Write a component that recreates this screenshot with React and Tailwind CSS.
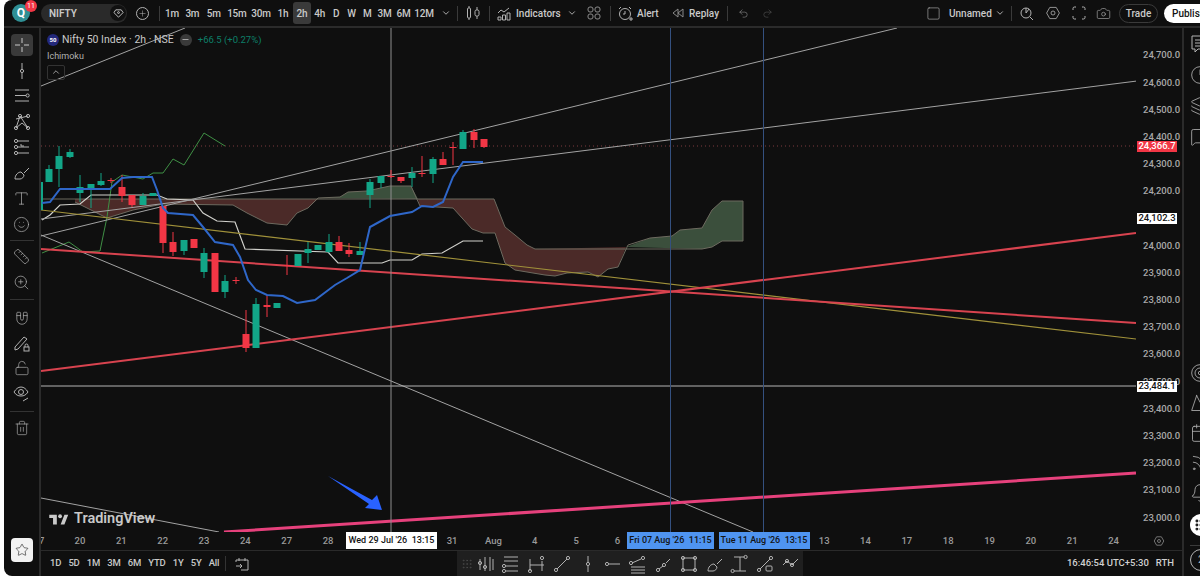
import {
  Bell, Calendar, Camera, ChevronDown, ChevronUp, Magnet, Minus, Plus, Redo2, Rss, Ruler, Smile, Square, Star, Trash2, Type, Undo2, ZoomIn, LockOpen, Clock, MessageSquare, Layers, Target, Mountain, Grip,
} from "lucide-react";

const timeframes = [
  { label: "1m", cell: "w-[20px]" }, { label: "3m", cell: "w-[20.750px]" }, { label: "5m", cell: "w-[22px]" }, { label: "15m", cell: "w-[24.250px]" },
  { label: "30m", cell: "w-[24px]" }, { label: "1h", cell: "w-[20px]" }, { label: "2h", cell: "w-[18px] rounded-[3px] bg-[#3a3a3a]" }, { label: "4h", cell: "w-[17.500px]" },
  { label: "D", cell: "w-[15.500px]" }, { label: "W", cell: "w-[15px]" }, { label: "M", cell: "w-[16.500px]" }, { label: "3M", cell: "w-[18px]" },
  { label: "6M", cell: "w-[20px]" }, { label: "12M", cell: "w-[21px]" },
];
const ranges = ["1D", "5D", "1M", "3M", "6M", "YTD", "1Y", "5Y", "All"];
const prices = ["24,700.0", "24,600.0", "24,500.0", "24,400.0", "24,300.0", "24,200.0", "", "24,000.0", "23,900.0", "23,800.0", "23,700.0", "23,600.0", "23,500.0", "23,400.0", "23,300.0", "23,200.0", "23,100.0", "23,000.0"];
const days = ["20", "21", "22", "23", "24", "27", "28", "", "", "31", "Aug", "4", "5", "6", "", "", "", "", "13", "14", "17", "18", "19", "20", "21", "24"];

// x, wick top, wick bottom, body top, body bottom, up
const candles = [
  [49, 165, 182, 169, 182, 1], [59, 146, 187, 156, 169, 1], [70, 149, 158, 152, 157, 1],
  [80, 175, 202, 187, 193, 1], [91, 184, 208, 184, 188, 1], [101, 173, 186, 181, 185, 1], [111, 178, 183, 180, 181, 0],
  [122, 175, 202, 187, 196, 0], [132, 195, 207, 195, 205, 0], [143, 193, 205, 196, 205, 1], [153, 193, 196, 193, 196, 1],
  [163, 206, 253, 206, 243, 0], [173, 232, 256, 242, 252, 0], [184, 240, 255, 240, 251, 1], [194, 239, 248, 239, 248, 0],
  [204, 248, 278, 253, 272, 1], [215, 253, 292, 253, 292, 0], [225, 275, 298, 281, 292, 1], [236, 277, 284, 280, 281, 0],
  [246, 310, 352, 334, 348, 0], [256, 298, 348, 304, 348, 1], [267, 295, 317, 305, 307, 0], [277, 303, 308, 303, 308, 1],
  [287, 255, 275, 265, 266, 0], [298, 254, 266, 254, 266, 1], [308, 242, 263, 249, 253, 1], [318, 245, 250, 245, 250, 1],
  [329, 234, 253, 242, 252, 1], [339, 236, 251, 242, 251, 0], [349, 243, 257, 250, 254, 0], [360, 242, 255, 251, 255, 1],
  [370, 179, 208, 182, 195, 1], [381, 176, 188, 176, 183, 1], [391, 170, 178, 176, 177, 0], [401, 177, 183, 177, 181, 0],
  [412, 167, 187, 173, 178, 1], [422, 156, 177, 173, 174, 0], [433, 157, 183, 159, 174, 1], [443, 152, 165, 159, 165, 0],
  [453, 142, 165, 147, 148, 0], [463, 130, 149, 132, 149, 1], [474, 129, 148, 132, 140, 0], [484, 139, 148, 139, 147, 0],
];

const blueLine = "42,203 50,202 60,189 110,189 122,178 133,177 152,177 157,190 163,208 168,213 193,215 203,227 215,242 233,245 240,257 248,280 256,290 267,295 283,296 297,303 315,300 335,285 347,278 360,270 370,227 390,216 412,212 422,206 433,207 443,202 453,177 463,162 483,162";
const whiteLine = "42,220 50,215 60,205 80,204 91,195 157,195 167,199 193,200 203,213 217,221 235,222 245,249 328,252 338,263 382,263 390,260 412,260 422,254 442,253 463,241 483,241";
const greenLine = "42,253 69,242 83,252 100,251 107,217 112,182 122,175 143,179 153,173 163,173 173,159 184,165 204,133 225,146";

function ToolIcon({ children, className = "" }) {
  return (
    <svg width="20" height="20" viewBox="0 0 20 20" fill="none" stroke="#b2b2b2" strokeWidth="1" className={className}>
      {children}
    </svg>
  );
}

function Node({ x, y }) {
  return <circle cx={x} cy={y} r="1.6" />;
}

const leftIcons = [
  <ToolIcon key="a"><path d="M10 2v6M10 12v6" /><Node x={10} y={10} /></ToolIcon>,
  <ToolIcon key="b"><path d="M3 4h14M3 9.5h11M3 15h14" /><Node x={15.6} y={9.5} /></ToolIcon>,
  <ToolIcon key="c"><path d="M4 16L8 4l8 12-6-5-6 5zM4 7l12-3" /><Node x={4} y={16} /><Node x={8} y={4} /><Node x={16} y={16} /><Node x={16} y={4} /></ToolIcon>,
  <ToolIcon key="d"><path d="M5 4h12M5 10h12M5 16h12M9 7v2h3" /><Node x={4} y={4} /><Node x={4} y={10} /><Node x={4} y={16} /></ToolIcon>,
  <ToolIcon key="e"><path d="M3 16c0-4 3-7 6-7l3 3c0 2-2 4-4 4H3zM12 10l5-5" /></ToolIcon>,
];

const bottomIcons = [
  <ToolIcon key="a"><path d="M4 5v11M9 3v14M14 3v14M17 5v11" /><Node x={4} y={9} /><Node x={9} y={13} /></ToolIcon>,
  <ToolIcon key="b"><path d="M3 3h14M3 7h14M5 12h12M5 17h12" /><Node x={3} y={12} /><Node x={3} y={17} /></ToolIcon>,
  <ToolIcon key="c"><path d="M3 5v12M3 11h14M15 7v10" /><Node x={3} y={17} /><Node x={15} y={4} /></ToolIcon>,
  <ToolIcon key="d"><path d="M5 15L15 5" /><Node x={4} y={16} /><Node x={16} y={4} /></ToolIcon>,
  <ToolIcon key="e"><path d="M10 2v6M10 12v6" /><Node x={10} y={10} /></ToolIcon>,
  <ToolIcon key="f"><path d="M6 10h11" /><Node x={4} y={10} /></ToolIcon>,
  <ToolIcon key="g"><path d="M3 13h14M3 16h14M3 19h14M4 9l9-4" /><Node x={3} y={9} /><Node x={15} y={4} /></ToolIcon>,
  <ToolIcon key="h"><path d="M5 15l4-3M12 9l4-4" /><Node x={4} y={16} /><Node x={10} y={11} /></ToolIcon>,
  <ToolIcon key="i"><rect x="4" y="4" width="12" height="12" /><Node x={4} y={4} /><Node x={16} y={4} /><Node x={4} y={16} /><Node x={16} y={16} /></ToolIcon>,
  <ToolIcon key="j"><path d="M3 17c0-4 3-7 6-7l3 3c0 2-2 4-4 4H3zM12 10l5-5" /></ToolIcon>,
  <ToolIcon key="k"><path d="M4 3h10M4 17h12M10 3v14" /><Node x={15.6} y={3} /><Node x={2.6} y={17} /></ToolIcon>,
  <ToolIcon key="l"><path d="M5 15L15 5" /><Node x={4} y={16} /><Node x={16} y={4} /><rect x="11" y="12" width="6" height="5" rx="1" /></ToolIcon>,
  <ToolIcon key="m"><path d="M2 11l4-4 5 4 6-6" /><Node x={6} y={7} /><Node x={11} y={11} /></ToolIcon>,
];

function HexIcon({ size = 20 }) {
  return (
    <svg width={size} height={size} viewBox="0 0 20 20" fill="none" stroke="#b2b2b2" strokeWidth="1">
      <path d="M6 3h8l4 7-4 7H6l-4-7z" />
      <circle cx="10" cy="10" r="2.5" />
    </svg>
  );
}

function Chart() {
  return (
    <svg width="1095" height="504" viewBox="41 28 1095 504" className="block">
      {/* cloud */}
      <polygon points="75,199 494,199 505,227 515,235 527,245 535,249 626,247 618,267 608,269 598,277 588,272 567,273 555,276 545,275 533,273 515,270 505,263 495,233 483,233 472,229 453,208 420,206 418,199 318,199 308,208 297,213 287,225 267,223 247,213 233,205 163,204 133,210 107,218 75,202" fill="#4b2a28" />
      <polygon points="318,198 340,197 348,192 367,191 390,186 411,186 418,199" fill="#3b4f3c" />
      <polygon points="626,247 650,238 672,236 680,230 702,228 712,210 722,201 743,201 743,241 722,241 712,247 702,249" fill="#3b4f3c" />
      <polyline points="42,199 494,199 505,227 515,235 527,245 535,249 702,249 712,247 722,241 743,241 743,201 722,201 712,210 702,228 680,230 672,236 650,238 628,245 618,267 608,269 598,277 588,272 567,273 555,276 545,275 533,273 515,270 505,263 495,233 483,233 472,229 453,208 420,206 411,186 390,186 367,191 348,192 340,197 318,198 308,208 297,213 287,225 267,223 247,213 233,205 163,204 133,210 107,218 75,202" fill="none" stroke="#6d6a5f" strokeWidth="1" />
      <polyline points={greenLine} fill="none" stroke="#3f8f45" strokeWidth="1" />
      <polyline points={whiteLine} fill="none" stroke="#d1d1cc" strokeWidth="1.2" />
      {/* levels and trend lines */}
      <line x1="41" y1="146" x2="1136" y2="146" stroke="#7d3a3e" strokeWidth="1" strokeDasharray="1 3" />
      <g stroke="#a3a3a3" strokeWidth="1">
        <line x1="41" y1="86" x2="185" y2="28" />
        <line x1="41" y1="236" x2="897" y2="28" />
        <line x1="41" y1="219" x2="1137" y2="81" />
        <line x1="41" y1="235" x2="753" y2="532" />
        <line x1="41" y1="498" x2="219" y2="532" />
      </g>
      <line x1="41" y1="210" x2="1136" y2="339" stroke="#a0913a" strokeWidth="1.2" />
      <line x1="41" y1="249" x2="1136" y2="323" stroke="#d8434f" strokeWidth="2" />
      <line x1="41" y1="371" x2="1136" y2="233" stroke="#d8434f" strokeWidth="2" />
      <line x1="41" y1="386" x2="1136" y2="386" stroke="#b5b5b5" strokeWidth="1" />
      <line x1="224" y1="532" x2="1136" y2="473" stroke="#e6417c" strokeWidth="3" />
      <line x1="391" y1="28" x2="391" y2="532" stroke="#8f8f8f" strokeWidth="1" />
      <line x1="670.5" y1="28" x2="670.5" y2="532" stroke="#34507f" strokeWidth="1" />
      <line x1="763.5" y1="28" x2="763.5" y2="532" stroke="#34507f" strokeWidth="1" />
      <polygon points="328,476 372,500 377,495 382,510 365,508 369,504" fill="#2962ff" />
      {/* candles */}
      <rect x="41" y="182" width="2" height="28" fill="#12a688" />
      {candles.map(([x, wt, wb, bt, bb, up]) => (
        <g key={`${x}-${bt}`} fill={up ? "#12a688" : "#f23645"} stroke={up ? "#12a688" : "#f23645"}>
          <line x1={x} y1={wt} x2={x} y2={wb} strokeWidth="1" />
          <rect x={x - 3.5} y={bt} width="7" height={Math.max(bb - bt, 1)} strokeWidth="0" />
        </g>
      ))}
      <polyline points={blueLine} fill="none" stroke="#2f67c9" strokeWidth="2" />
    </svg>
  );
}

function Header() {
  return (
    <header className="flex h-[26px] shrink-0 items-center whitespace-nowrap text-[10px] font-medium text-[#c9c9c9] [&>*]:shrink-0">
      <div className="relative ml-[8px] flex h-[18px] w-[18px] items-center justify-center rounded-full bg-[#2f8f94] text-[12px] font-bold text-white">
        Q
        <span className="absolute -right-[7px] -top-[4px] flex h-[12px] w-[12px] items-center justify-center rounded-full bg-[#f23645] text-[7px] font-normal">11</span>
      </div>
      <div className="ml-[11px] flex h-[19px] w-[86px] items-center justify-between rounded-full bg-[#2a2a2a] pl-[8px] pr-[1px] font-semibold">
        NIFTY
        <span className="flex h-[16px] w-[16px] items-center justify-center rounded-full bg-[#111]">
          <svg width="11" height="11" viewBox="0 0 12 12" fill="none" stroke="#c9c9c9"><path d="M3 2h6l2 3-5 5-5-5z" /><circle cx="6" cy="5" r="1" /></svg>
        </span>
      </div>
      <span className="ml-[8.500px] flex h-[13px] w-[13px] items-center justify-center rounded-full border border-[#b2b2b2]"><Plus size={9} strokeWidth={1.2} /></span>
      <span className="ml-[10.500px] h-[15px] w-px bg-[#3a3a3a]" />
      <div className="ml-[2px] flex items-center tracking-[-0.2px]">
        {timeframes.map((tf) => (
          <span key={tf.label} className={`flex h-[22px] items-center justify-center ${tf.cell}`}>{tf.label}</span>
        ))}
      </div>
      <ChevronDown size={10} className="ml-[6.500px]" />
      <span className="ml-[6px] h-[15px] w-px bg-[#3a3a3a]" />
      <svg width="14" height="16" viewBox="0 0 14 16" fill="none" stroke="#b2b2b2" className="ml-[8px]"><rect x="1.5" y="3" width="3" height="10" rx="1" /><path d="M3 1v2M3 13v2M11 2v3M11 11v3" /><rect x="9" y="5" width="4" height="6" rx="1.5" /></svg>
      <span className="ml-[9px] h-[15px] w-px bg-[#3a3a3a]" />
      <svg width="15" height="15" viewBox="0 0 15 15" fill="none" stroke="#b2b2b2" className="ml-[6.500px]"><path d="M1 7l3-3 3 2 5-4M1 14v-3h3v3zM5.500 14V9h3v5zM10 14V7h3v7z" /></svg>
      <span className="ml-[4.500px] w-[42px]">Indicators</span>
      <ChevronDown size={10} className="ml-[9px]" />
      <svg width="14" height="14" viewBox="0 0 14 14" fill="none" stroke="#8a8a8a" className="ml-[10px]"><rect x="1" y="1" width="5" height="5" rx="2" /><rect x="8" y="1" width="5" height="5" rx="2" /><rect x="1" y="8" width="5" height="5" rx="2" /><rect x="8" y="8" width="5" height="5" rx="2" /></svg>
      <span className="ml-[9px] h-[15px] w-px bg-[#3a3a3a]" />
      <svg width="15" height="15" viewBox="0 0 15 15" fill="none" stroke="#b2b2b2" className="ml-[6.500px]"><circle cx="7" cy="8" r="5.500" /><path d="M7 5v3H5M1 3l2-2M13 3l-2-2M11 13h4M13 11v4" /></svg>
      <span className="ml-[4.500px] w-[21px]">Alert</span>
      <svg width="12" height="10" viewBox="0 0 12 10" fill="none" stroke="#8a8a8a" className="ml-[14px]"><path d="M6 1L1 5l5 4zM11 1L6 5l5 4z" /></svg>
      <span className="ml-[5px] w-[28px]">Replay</span>
      <span className="ml-[10px] h-[15px] w-px bg-[#3a3a3a]" />
      <Undo2 size={11} strokeWidth={1.2} className="ml-[9.500px] text-[#9a9a9a]" />
      <Redo2 size={11} strokeWidth={1.2} className="ml-[13px] text-[#5a5a5a]" />
      <Square size={15} strokeWidth={1} className="ml-[153px] text-[#b2b2b2]" />
      <span className="ml-[8.500px] w-[40px]">Unnamed</span>
      <ChevronDown size={10} className="ml-[6px]" />
      <span className="ml-[6px] h-[15px] w-px bg-[#3a3a3a]" />
      <svg width="14" height="15" viewBox="0 0 14 15" fill="none" stroke="#b2b2b2" className="ml-[8px]"><circle cx="6" cy="7" r="5" /><path d="M6 2v5l3-4M10 11l3 3" /></svg>
      <span className="ml-[11px]"><HexIcon size={16} /></span>
      <svg width="14" height="14" viewBox="0 0 14 14" fill="none" stroke="#b2b2b2" className="ml-[11px]"><path d="M1 4V2.500A1.500 1.500 0 012.500 1H4M10 1h1.500A1.500 1.500 0 0113 2.500V4M13 10v1.500a1.500 1.500 0 01-1.500 1.500H10M4 13H2.500A1.500 1.500 0 011 11.500V10" /></svg>
      <Camera size={15} strokeWidth={1} className="ml-[9.500px] text-[#b2b2b2]" />
      <span className="ml-[8.500px] flex h-[19px] w-[39px] items-center justify-center rounded-full border border-[#3a3a3a]">Trade</span>
      <span className="ml-[6px] flex h-[19px] w-[50px] items-center rounded-full bg-white pl-[8px] text-[#131313]">Publish</span>
    </header>
  );
}

function LeftToolbar() {
  const rowClass = "flex h-[25.6px] shrink-0 items-center justify-center";
  return (
    <aside className="flex w-[35px] shrink-0 flex-col pt-[4.200px]">
      <div className={rowClass}>
        <span className="flex h-[22px] w-[22px] items-center justify-center rounded-[4px] bg-[#3a3a3a]">
          <svg width="14" height="14" viewBox="0 0 14 14" stroke="#c9c9c9"><path d="M7 0v5M7 9v5M0 7h5M9 7h5" /></svg>
        </span>
      </div>
      {leftIcons.map((icon, i) => <div key={i} className={rowClass}>{icon}</div>)}
      <div className={rowClass}><Type size={17} strokeWidth={1} className="text-[#b2b2b2]" /></div>
      <div className={rowClass}><Smile size={17} strokeWidth={1} className="text-[#b2b2b2]" /></div>
      <div className="flex h-[7px] items-center justify-center"><span className="h-px w-[24px] bg-[#333]" /></div>
      <div className={rowClass}><Ruler size={17} strokeWidth={1} className="text-[#b2b2b2]" /></div>
      <div className={rowClass}><ZoomIn size={17} strokeWidth={1} className="text-[#b2b2b2]" /></div>
      <div className="flex h-[9px] items-center justify-center"><span className="h-px w-[24px] bg-[#333]" /></div>
      <div className={rowClass}><Magnet size={16} strokeWidth={1} className="rotate-[135deg] text-[#b2b2b2]" /></div>
      <div className={rowClass}>
        <ToolIcon><path d="M3 14l9-10 3 2-9 10-3 1z" /><rect x="12" y="14" width="5" height="4" /><path d="M13 14v-1.500a1.500 1.500 0 013 0V14" /></ToolIcon>
      </div>
      <div className={rowClass}><LockOpen size={16} strokeWidth={1} className="text-[#b2b2b2]" /></div>
      <div className={rowClass}>
        <ToolIcon><path d="M2 8c2-3 4-5 7-5s5 2 7 5c-2 3-4 4-7 4s-5-1-7-4z" /><circle cx="9" cy="8" r="2.500" /><path d="M11 17l5-3" /></ToolIcon>
      </div>
      <div className="flex h-[9px] items-center justify-center"><span className="h-px w-[24px] bg-[#333]" /></div>
      <div className={rowClass}><Trash2 size={16} strokeWidth={1} className="text-[#b2b2b2]" /></div>
      <div className="mb-[14px] mt-auto flex justify-center">
        <span className="flex h-[24px] w-[22px] items-center justify-center rounded-[4px] bg-[#f2f2f2]"><Star size={14} strokeWidth={1} className="text-[#131313]" /></span>
      </div>
    </aside>
  );
}

function RightToolbar() {
  const rowClass = "flex h-[31px] items-center";
  const lowClass = "flex h-[30px] items-center";
  return (
    <aside className="flex w-[16px] shrink-0 flex-col overflow-hidden pl-[6px] pb-[5px] text-[#b2b2b2]">
      <div className={rowClass}><svg width="20" height="20" viewBox="0 0 20 20" fill="none" stroke="#b2b2b2" className="shrink-0"><path d="M2 2h16v13H8l-3 3v-3H2zM5 6h10M5 9h10M5 12h10" /></svg></div>
      <div className={rowClass}><Clock size={20} strokeWidth={1} className="shrink-0" /></div>
      <div className={rowClass}><Layers size={20} strokeWidth={1} className="shrink-0" /></div>
      <div className={rowClass}><MessageSquare size={20} strokeWidth={1} className="shrink-0" /></div>
      <div className={`${lowClass} mt-auto`}><Target size={20} strokeWidth={1} className="shrink-0" /></div>
      <div className={lowClass}><Mountain size={20} strokeWidth={1} className="shrink-0" /></div>
      <div className={lowClass}><Calendar size={20} strokeWidth={1} className="shrink-0" /></div>
      <div className={lowClass}><Rss size={20} strokeWidth={1} className="shrink-0" /></div>
      <div className={lowClass}><Bell size={20} strokeWidth={1} className="shrink-0" /></div>
      <span className="mt-[6px] flex h-[22px] w-[22px] shrink-0 items-center justify-center rounded-full bg-white"><Grip size={14} strokeWidth={3} className="text-[#131313]" /></span>
      <span className="mt-[9px] h-px w-[22px] shrink-0 bg-[#3a3a3a]" />
      <span className="mt-[3px] flex h-[22px] w-[22px] shrink-0 items-center justify-center rounded-full border border-[#b2b2b2] text-[11px]">2</span>
    </aside>
  );
}

function PriceAxis() {
  return (
    <div className="relative w-[46px] shrink-0 pt-[13.900px] text-[9.500px] font-medium text-[#a8a8a8]">
      {prices.map((p, i) => (
        <div key={i} className="flex h-[27.200px] items-center pl-[7px]">{p}</div>
      ))}
      <span className="absolute left-[1px] top-[113px] flex h-[11px] w-[40px] items-center justify-center bg-[#f23645] text-white">24,366.7</span>
      <span className="absolute left-[1px] top-[185px] flex h-[11px] w-[40px] items-center justify-center bg-white text-[#131313]">24,102.3</span>
      <span className="absolute left-[1px] top-[353px] flex h-[11px] w-[40px] items-center justify-center bg-white text-[#131313]">23,484.1</span>
    </div>
  );
}

function TimeAxis() {
  return (
    <div className="relative flex h-[18px] shrink-0 items-center whitespace-nowrap text-[9.500px] font-medium text-[#9a9a9a]">
      <div className="w-[18.300px] shrink-0 overflow-hidden"><span className="-ml-[2px] block">7</span></div>
      {days.map((d, i) => (
        <span key={i} className="w-[41.350px] shrink-0 text-center">{d}</span>
      ))}
      <span className="ml-auto flex w-[46px] justify-center"><HexIcon size={12} /></span>
      <span className="absolute left-[305px] top-0 flex h-[17px] w-[91px] items-center justify-center bg-white text-[9px] text-[#131313]">Wed 29 Jul '26 &nbsp;13:15</span>
      <span className="absolute left-[586px] top-0 flex h-[17px] w-[87px] items-center justify-center bg-[#4f94f0] text-[9px] text-[#131313]">Fri 07 Aug '26 &nbsp;11:15</span>
      <span className="absolute left-[677.500px] top-0 flex h-[17px] w-[91px] items-center justify-center bg-[#4f94f0] text-[9px] text-[#131313]">Tue 11 Aug '26 &nbsp;13:15</span>
    </div>
  );
}

function BottomBar() {
  return (
    <div className="relative flex h-[26px] shrink-0 items-center border-t border-[#2a2a2a] pl-[9px] text-[9.500px] font-medium text-[#c9c9c9]">
      <div className="flex items-center gap-[7.200px] tracking-[-0.2px]">
        {ranges.map((r) => <span key={r}>{r}</span>)}
      </div>
      <span className="ml-[6px] h-[15px] w-px bg-[#333]" />
      <svg width="14" height="14" viewBox="0 0 14 14" fill="none" stroke="#b2b2b2" className="ml-[9px]"><path d="M1 5V3h12v10H6M1 9h6M5 7l2 2-2 2M4 1v3M10 1v3" /></svg>
      <div className="absolute left-[416px] top-0 flex h-[25px] w-[346px] items-center bg-[#1f1f1f] pl-[4px]">
        <Grip size={12} strokeWidth={1} className="mr-[3px] shrink-0 text-[#555]" />
        <div className="flex items-center gap-[5.400px]">
          {bottomIcons.map((icon) => icon)}
        </div>
      </div>
      <span className="ml-auto mr-[7px] text-[#d1d1d1]">16:46:54 UTC+5:30</span>
      <span className="mr-[8px] text-[#d1d1d1]">RTH</span>
    </div>
  );
}

export default function App() {
  return (
    <div className="h-[576px] w-[1200px] overflow-hidden bg-white" style={{ fontFamily: 'Roboto, sans-serif' }}>
      <div className="ml-[4px] flex h-full flex-col overflow-hidden rounded-l-[8px] bg-[#0f0f0f]">
        <Header />
        <div className="h-[2px] shrink-0 bg-[#2b2b2b]" />
        <div className="flex min-h-0 flex-1">
          <LeftToolbar />
          <div className="w-[2px] shrink-0 bg-[#2b2b2b]" />
          <main className="flex w-[1141px] shrink-0 flex-col">
            <div className="flex h-[504px] shrink-0">
              <div className="relative w-[1095px] shrink-0">
                <Chart />
                <div className="absolute left-[6px] top-[4px]">
                  <div className="flex items-center text-[10.500px] text-[#c9c9c9]">
                    <span className="mr-[3px] flex h-[12px] w-[12px] items-center justify-center rounded-full bg-[#23287a] text-[6px] font-bold text-white">50</span>
                    Nifty 50 Index · 2h · NSE
                    <span className="ml-[6px] flex h-[12px] w-[12px] items-center justify-center rounded-full bg-[#3a3a3a]"><Minus size={9} strokeWidth={2} /></span>
                    <span className="ml-[6px] text-[9.500px] text-[#0d7f69]">+66.5 (+0.27%)</span>
                  </div>
                  <div className="mt-[2px] text-[9px] leading-[12px] text-[#b2b2b2]">Ichimoku</div>
                  <span className="mt-[3px] flex h-[15px] w-[18px] items-center justify-center rounded-[2px] border border-[#333] text-[#b2b2b2]"><ChevronUp size={10} /></span>
                </div>
                <div className="absolute left-[8px] top-[484px] flex items-center gap-[5px] text-[#c9c9c9]">
                  <svg width="20" height="13" viewBox="0 0 36 24" fill="#c9c9c9"><path d="M14 3H0v6h7v12h7V3zM28 21h-7l7-18h7l-7 18z" /><circle cx="20" cy="6" r="3.500" /></svg>
                  <span className="text-[14.500px] font-semibold leading-none">TradingView</span>
                </div>
              </div>
              <PriceAxis />
            </div>
            <TimeAxis />
            <BottomBar />
          </main>
          <div className="w-[2px] shrink-0 bg-[#2b2b2b]" />
          <RightToolbar />
        </div>
      </div>
    </div>
  );
}
